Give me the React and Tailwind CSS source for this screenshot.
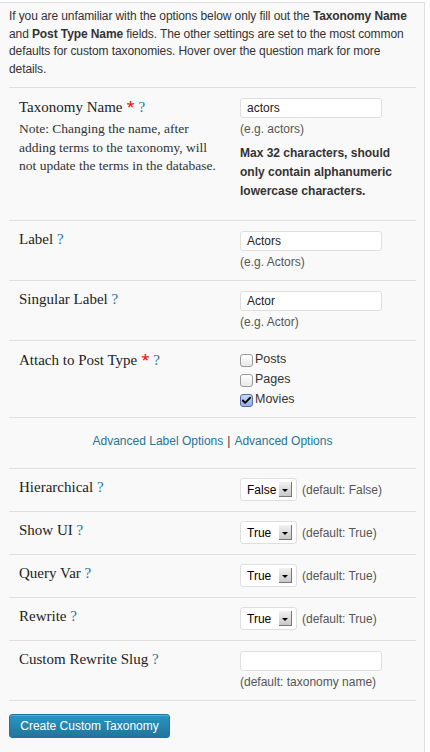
import { Check } from 'lucide-react'

const serif = { fontFamily: '"Liberation Serif", serif' }

function Q() {
  return <span className="text-[#21759b]"> ?</span>
}

function Req() {
  return <span className="text-[#e00] font-sans"> *</span>
}

function Row({ label, children, className = '' }) {
  return (
    <div className={`flex border-b border-[#dfdfdf] ${className}`}>
      <div className="w-[231px] pl-[10px] pt-[8px] shrink-0">{label}</div>
      <div className="pt-[10px] flex-1">{children}</div>
    </div>
  )
}

function Label({ children }) {
  return (
    <div className="text-[15px] leading-[20px] text-[#222] font-['Liberation_Serif',serif]">{children}</div>
  )
}

function TextInput({ value }) {
  return (
    <div className="w-[142px] h-[20px] bg-white border border-[#dfdfdf] rounded-[3px] px-[6px] text-[12px] leading-[18px] text-[#222]">
      {value}
    </div>
  )
}

function Hint({ children }) {
  return <div className="text-[12px] leading-[20px] text-[#555] mt-[1px]">{children}</div>
}

function Select({ value, def }) {
  return (
    <div className="flex items-center">
      <div className="w-[57px] h-[23px] bg-white border border-[#dfdfdf] rounded-[3px] flex items-center justify-between pl-[6px] pr-[4px]">
        <span className="text-[12px] text-black">{value}</span>
        <span className="w-[13px] h-[15px] bg-gradient-to-b from-[#f2f2f2] to-[#c8c8c8] border-r border-b border-[#777] flex items-center justify-center">
          <span className="w-0 h-0 border-l-[3px] border-r-[3px] border-t-[3px] border-l-transparent border-r-transparent border-t-black mt-[2px]" />
        </span>
      </div>
      <span className="ml-[5px] text-[12px] text-[#555]">(default: {def})</span>
    </div>
  )
}

function Box({ checked, label }) {
  return (
    <div className="flex items-center h-[20px]">
      {checked ? (
        <span className="w-[13px] h-[13px] rounded-[3px] border border-[#5a6aa8] bg-gradient-to-b from-[#c9d8f5] to-[#8fb0e8] flex items-center justify-center mt-[3px]">
          <Check className="w-[13px] h-[13px] text-black" strokeWidth={4} />
        </span>
      ) : (
        <span className="w-[13px] h-[13px] rounded-[3px] border border-[#9a9a9a] bg-gradient-to-b from-white to-[#e8e8e8] mt-[3px]" />
      )}
      <span className="ml-[2px] text-[12.5px] text-[#333]">{label}</span>
    </div>
  )
}

export default function App() {
  return (
    <div className="bg-white w-[430px] h-[752px] pt-[2px] font-['Liberation_Sans',Arial,sans-serif]">
      <div className="w-[425px] h-[750px] bg-[#f9f9f9] border-t border-r border-[#dfdfdf] pl-[9px] pr-[8px]">
        <p className="text-[12px] leading-[17.5px] text-[#333] pt-[5px] pb-[9px] border-b border-[#dfdfdf] tracking-[-0.1px]">
          If you are unfamiliar with the options below only fill out the <b>Taxonomy Name</b> and{' '}
          <b>Post Type Name</b> fields. The other settings are set to the most common defaults for custom
          taxonomies. Hover over the question mark for more details.
        </p>

        <Row
          className="h-[133px]"
          label={
            <>
              <Label>
                Taxonomy Name<Req />
                <Q />
              </Label>
              <div className="text-[13.5px] leading-[18.5px] text-[#333] mt-[3px] w-[200px]" style={serif}>
                Note: Changing the name, after adding terms to the taxonomy, will not update the terms in the
                database.
              </div>
            </>
          }
        >
          <TextInput value="actors" />
          <Hint>(e.g. actors)</Hint>
          <div className="text-[12px] leading-[19px] font-bold text-[#333] mt-[5px] w-[165px]">
            Max 32 characters, should only contain alphanumeric lowercase characters.
          </div>
        </Row>

        <Row
          className="h-[60px]"
          label={
            <Label>
              Label<Q />
            </Label>
          }
        >
          <TextInput value="Actors" />
          <Hint>(e.g. Actors)</Hint>
        </Row>

        <Row
          className="h-[60px]"
          label={
            <Label>
              Singular Label<Q />
            </Label>
          }
        >
          <TextInput value="Actor" />
          <Hint>(e.g. Actor)</Hint>
        </Row>

        <div className="flex border-b border-[#dfdfdf] h-[77px]">
          <div className="w-[231px] pl-[10px] pt-[8px] shrink-0">
            <Label>
              Attach to Post Type<Req />
              <Q />
            </Label>
          </div>
          <div className="pt-[8px]">
            <Box label="Posts" />
            <Box label="Pages" />
            <Box checked label="Movies" />
          </div>
        </div>

        <div className="h-[51px] border-b border-[#dfdfdf] flex items-center justify-center text-[12px] text-[#21759b] pb-[4px]">
          <span>Advanced Label Options</span>
          <span className="text-[#333] mx-[4px]">|</span>
          <span>Advanced Options</span>
        </div>

        {[
          ['Hierarchical', 'False', 'False'],
          ['Show UI', 'True', 'True'],
          ['Query Var', 'True', 'True'],
          ['Rewrite', 'True', 'True'],
        ].map(([name, v, d]) => (
          <Row
            key={name}
            className="h-[43px]"
            label={
              <Label>
                {name}
                <Q />
              </Label>
            }
          >
            <div className="-mt-[1px]">
              <Select value={v} def={d} />
            </div>
          </Row>
        ))}

        <Row
          className="h-[60px]"
          label={
            <Label>
              Custom Rewrite Slug<Q />
            </Label>
          }
        >
          <TextInput value="" />
          <Hint>(default: taxonomy name)</Hint>
        </Row>

        <div className="pt-[12px]">
          <button className="w-[161px] h-[24px] rounded-[3px] border border-[#21759b] bg-gradient-to-b from-[#2a95c5] to-[#21759b] text-white text-[12px] shadow-[inset_0_1px_0_rgba(120,200,230,0.5)]">
            Create Custom Taxonomy
          </button>
        </div>
      </div>
    </div>
  )
}
